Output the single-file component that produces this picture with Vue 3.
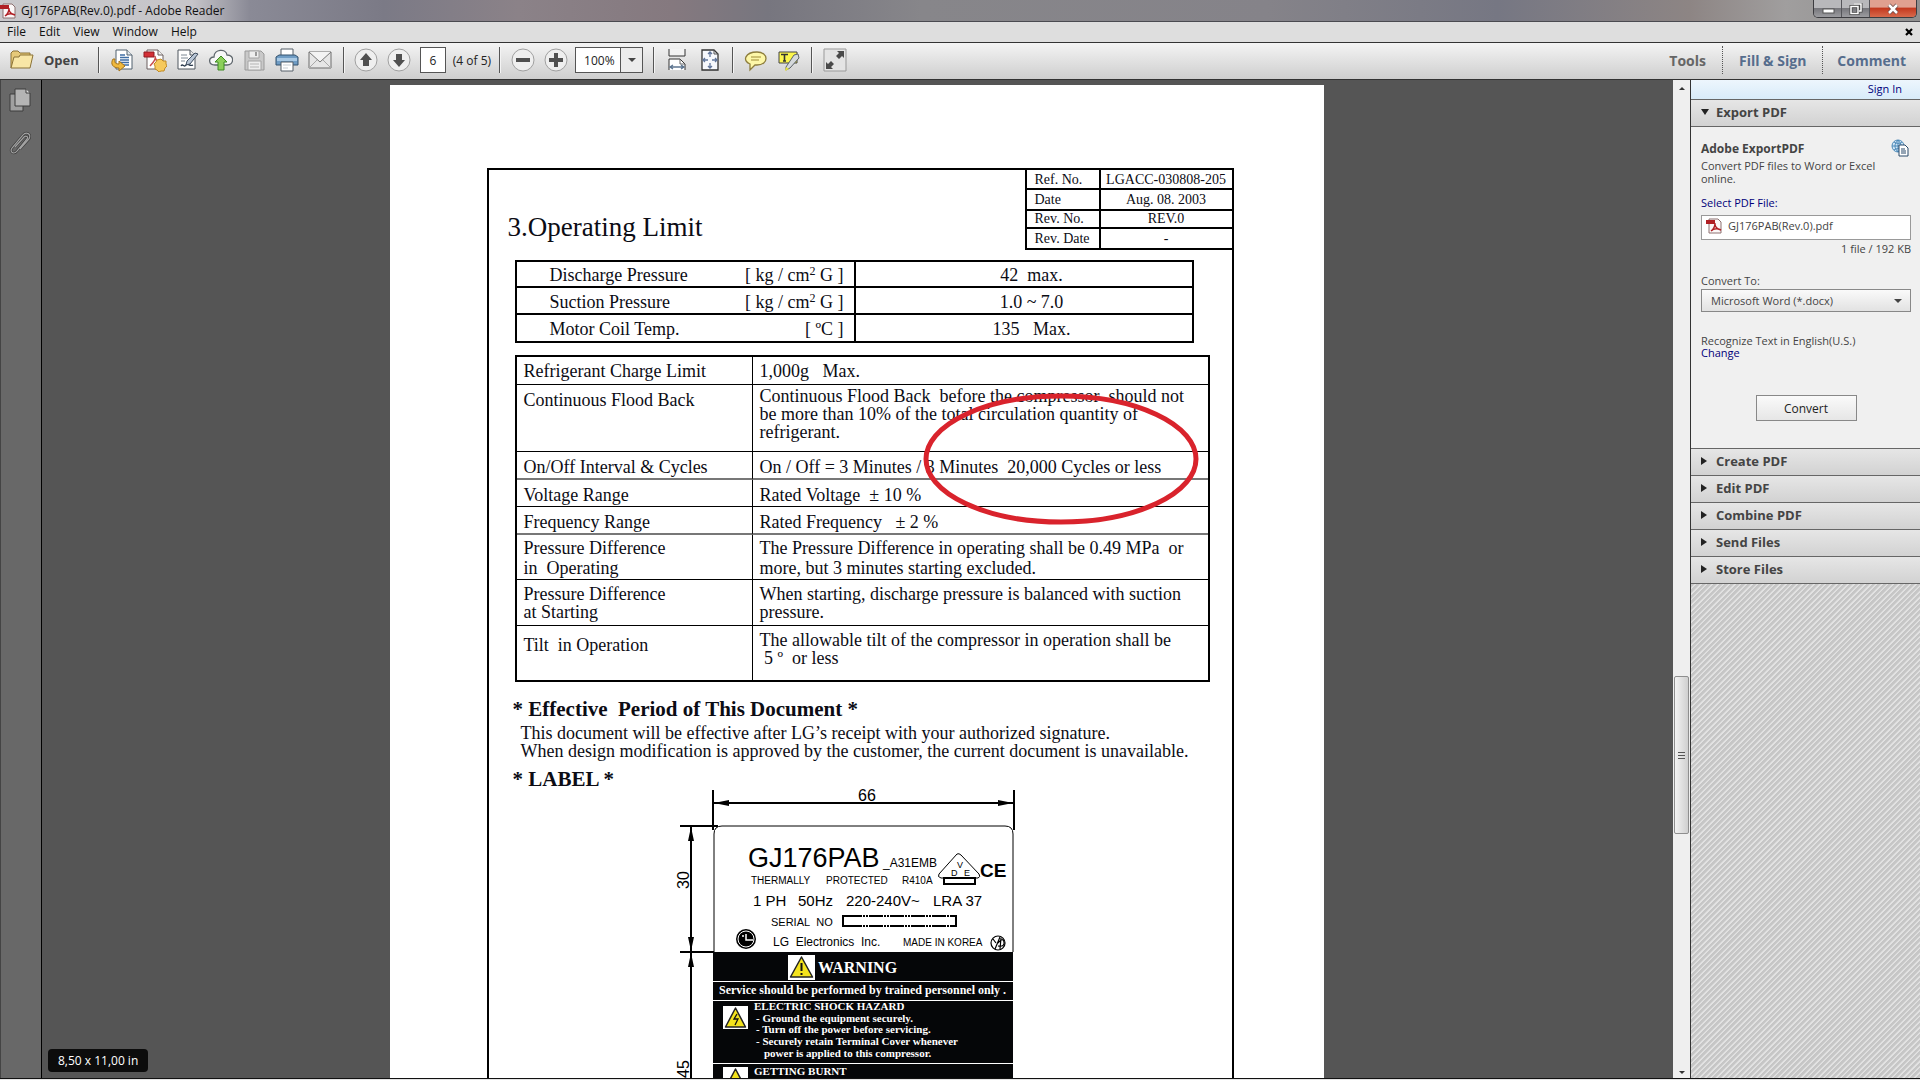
<template>
  <div class="reader">
    <header class="title-bar">
      <svg class="app-icon" viewBox="0 0 16 16" aria-hidden="true">
        <path d="M3 1h9l3 3v11H3z" fill="#fbf7f7" stroke="#8d7070" />
        <path d="M0 2h9v4H0z" fill="#b01f24" />
        <path d="M5 13c3-2 4-5 4-8M9 6c0 3 2 5 6 6M5 13c3-3 6-3 10-1" fill="none" stroke="#b01f24" stroke-width="1.4" />
      </svg>
      <h1 class="window-title">GJ176PAB(Rev.0).pdf - Adobe Reader</h1>
      <div class="window-buttons">
        <button class="win-btn" aria-label="Minimize">
          <svg viewBox="0 0 14 12"><rect x="2" y="6" width="11" height="4" fill="#fff" stroke="#555" /></svg>
        </button>
        <button class="win-btn restore" aria-label="Restore">
          <svg viewBox="0 0 14 12"><path d="M5 1h7v7h-2M2 3.500h7v7H2z" fill="none" stroke="#444" stroke-width="3" /><path d="M5 1h7v7h-2M2 3.500h7v7H2z" fill="none" stroke="#fff" stroke-width="1.500" /></svg>
        </button>
        <button class="win-btn close" aria-label="Close">
          <svg viewBox="0 0 14 12"><path d="M3 2l8 8M11 2l-8 8" stroke="#6b4a48" stroke-width="4" /><path d="M3 2l8 8M11 2l-8 8" stroke="#fff" stroke-width="2.500" /></svg>
        </button>
      </div>
    </header>

    <nav class="menu-bar">
      <button v-for="item in menus" :key="item" class="menu-item">{{ item }}</button>
      <button class="menu-close" aria-label="Close document">
        <svg viewBox="0 0 8 8"><path d="M1 1l6 6M7 1L1 7" stroke="#000" stroke-width="2.200" /></svg>
      </button>
    </nav>

    <div class="toolbar">
      <button class="open-btn">
        <svg viewBox="0 0 24 20">
          <path d="M1 18V3l2-2h5l2 2h10v4" fill="#e6c979" stroke="#8b7237" />
          <path d="M1 18L4 7h5l1-2h13l-3 13z" fill="#f8e6a6" stroke="#8b7237" />
        </svg>
        <span>Open</span>
      </button>
      <span class="sep"></span>
      <button class="tool" aria-label="Export">
        <svg viewBox="0 0 24 24">
          <path d="M6 2h11l5 5v14H6z" fill="#fff" stroke="#51606f" />
          <path d="M17 2v5h5" fill="#dfe6ec" stroke="#51606f" />
          <path d="M10 7h5M10 9.500h9M10 12h9M10 14.500h9M12 17h7" stroke="#3f6ea5" stroke-width="1.300" />
          <path d="M3 11c-3 5 0 9 6 9v3l6-5-6-5v3c-3 0-5-1-4-5z" fill="#f0b93e" stroke="#a4731a" />
        </svg>
      </button>
      <button class="tool" aria-label="Create PDF">
        <svg viewBox="0 0 24 24">
          <path d="M4 2h11l5 5v14H4z" fill="#fff" stroke="#6a5f5f" />
          <path d="M15 2v5h5" fill="#eee" stroke="#6a5f5f" />
          <path d="M7 18c4-4 6-8 5-10M12 9c1 4 3 6 7 6" fill="none" stroke="#c94e4e" stroke-width="1.500" />
          <path d="M1 4h10v5H1z" fill="#d32f36" stroke="#8f1d22" />
          <path d="M18 11l2 2 3 0v3l1 2-2 2-1 3h-3l-2 1-2-2-2-1v-3l-1-2 2-2 1-2z" fill="#f6c95c" stroke="#c08a24" />
        </svg>
      </button>
      <button class="tool" aria-label="Sign">
        <svg viewBox="0 0 24 24">
          <path d="M2 2h12l5 5v14H2z" fill="#fff" stroke="#4f565e" />
          <path d="M14 2v5h5" fill="#e9e9e9" stroke="#4f565e" />
          <path d="M5 7h6M5 10h7M5 13h4" stroke="#7d8894" />
          <path d="M5 18c2-3 3 2 5-1s3 2 7 0" fill="none" stroke="#26374a" stroke-width="1.300" />
          <path d="M11 13l8-8 3 1-8 10-4 1z" fill="#b9c6d6" stroke="#3f4e60" />
        </svg>
      </button>
      <button class="tool" aria-label="Upload">
        <svg viewBox="0 0 24 24">
          <path d="M6 17c-7 0-7-8-1-8 0-8 12-9 13-2 8 0 7 10 0 10z" fill="#f7f7f7" stroke="#5e666c" stroke-width="1.300" />
          <path d="M12 8l6 6h-3v8H9v-8H6z" fill="#8ccf5a" stroke="#3d8a22" />
        </svg>
      </button>
      <button class="tool" aria-label="Save" disabled>
        <svg viewBox="0 0 24 24">
          <path d="M3 3h16l3 3v16H3z" fill="#c9c9c9" stroke="#999" />
          <path d="M7 3h10v7H7zM6 13h13v9H6z" fill="#eee" stroke="#a4a4a4" />
          <path d="M13 4h2v4h-2z" fill="#999" />
          <path d="M8 16h9M8 19h9" stroke="#b4b4b4" />
        </svg>
      </button>
      <button class="tool" aria-label="Print">
        <svg viewBox="0 0 24 24">
          <path d="M6 1h12v9H6z" fill="#fff" stroke="#555f69" />
          <path d="M1 9l3-2h16l3 2v8H1z" fill="#6f9cc4" stroke="#34536f" />
          <path d="M2 10h20v3H2z" fill="#a9c9e4" />
          <path d="M6 14h12v9H6z" fill="#fff" stroke="#555f69" />
          <path d="M8 17h8M8 20h5" stroke="#c5ccd2" />
        </svg>
      </button>
      <button class="tool" aria-label="Mail">
        <svg viewBox="0 0 24 24">
          <path d="M1 4h22v16H1z" fill="#e6e6e6" stroke="#6c6c6c" />
          <path d="M1 20l8-8M23 20l-8-8" stroke="#a9a9a9" />
          <path d="M1 4l11 10L23 4" fill="#f3f3f3" stroke="#777" />
        </svg>
      </button>
      <span class="sep"></span>
      <button class="tool round" aria-label="Previous page">
        <svg viewBox="0 0 24 24"><circle cx="12" cy="12" r="11" /><path d="M12 5l6 7h-3v6H9v-6H6z" /></svg>
      </button>
      <button class="tool round" aria-label="Next page">
        <svg viewBox="0 0 24 24"><circle cx="12" cy="12" r="11" /><path d="M12 19l6-7h-3V6H9v6H6z" /></svg>
      </button>
      <input v-model="pageNumber" class="page-input" type="text" aria-label="Page" />
      <span class="page-count">(4 of 5)</span>
      <span class="sep"></span>
      <button class="tool round" aria-label="Zoom out">
        <svg viewBox="0 0 24 24"><circle cx="12" cy="12" r="11" /><path d="M5 10h14v4H5z" /></svg>
      </button>
      <button class="tool round" aria-label="Zoom in">
        <svg viewBox="0 0 24 24"><circle cx="12" cy="12" r="11" /><path d="M10 5h4v5h5v4h-5v5h-4v-5H5v-4h5z" /></svg>
      </button>
      <div class="zoom-box">
        <select v-model="zoom" aria-label="Zoom level">
          <option>100%</option>
          <option>125%</option>
        </select>
        <span class="zoom-arrow"><i class="caret"></i></span>
      </div>
      <span class="sep"></span>
      <button class="tool" aria-label="Fit width">
        <svg viewBox="0 0 24 24">
          <path d="M4 1v7h16V1" fill="#f3f3f3" stroke="#333" />
          <path d="M4 22V11h11l5 5v6" fill="#fff" stroke="#333" />
          <path d="M15 11v5h5" fill="none" stroke="#666" />
          <path d="M6 19h12M8 17l-3 2 3 2M16 17l3 2-3 2" fill="none" stroke="#5d7590" stroke-width="1.300" />
        </svg>
      </button>
      <button class="tool" aria-label="Fit page">
        <svg viewBox="0 0 24 24">
          <path d="M4 2h12l4 4v16H4z" fill="#f6f8fc" stroke="#333" stroke-width="1.300" />
          <path d="M16 2v4h4" fill="none" stroke="#555" />
          <path d="M12 4v5M12 15v5M6 12h4M14 12h4M10 6l2-2 2 2M10 18l2 2 2-2M7 10l-2 2 2 2M17 10l2 2-2 2" fill="none" stroke="#60759b" stroke-width="1.300" />
        </svg>
      </button>
      <span class="sep"></span>
      <button class="tool" aria-label="Comment">
        <svg viewBox="0 0 24 24">
          <path d="M13 4c12 0 12 13 0 13h-2l-5 5v-6c-8-3-5-12 7-12z" fill="#fdf7a8" stroke="#8d7d3c" stroke-width="1.300" />
          <path d="M7 9h10M7 12h8" stroke="#a08b36" stroke-width="1.200" />
        </svg>
      </button>
      <button class="tool" aria-label="Highlight text">
        <svg viewBox="0 0 24 24">
          <path d="M2 4h18v11H2z" fill="#fbf64c" stroke="#444" />
          <path d="M4 6.500h7M7.500 7v6M6 13h3" stroke="#333" stroke-width="1.600" />
          <path d="M9 19l8-12 4-1 1 4-9 10-4 2z" fill="#d5d9dc" stroke="#5c6266" />
          <path d="M9 19l3 2-4 2z" fill="#e6e33f" />
        </svg>
      </button>
      <span class="sep"></span>
      <button class="tool" aria-label="Read mode">
        <svg viewBox="0 0 24 24">
          <path d="M1 1h22v22H1z" fill="#e4e4e4" stroke="#999" />
          <path d="M14 3h7v7l-2-2-3 3-3-3 3-3zM10 21H3v-7l2 2 3-3 3 3-3 3z" fill="#4a4a4a" />
        </svg>
      </button>

      <div class="pane-tabs">
        <button class="pane-tab active">Tools</button>
        <button class="pane-tab">Fill &amp; Sign</button>
        <button class="pane-tab">Comment</button>
      </div>
    </div>

    <div class="workspace">
      <aside class="side-bar">
        <button aria-label="Page thumbnails">
          <svg viewBox="0 0 22 24">
            <path d="M1 6h13v17H1z" fill="#a0a0a0" stroke="#3d3d3d" />
            <path d="M6 1h11l4 4v13H6z" fill="#b4b4b4" stroke="#3d3d3d" />
            <path d="M17 1v4h4" fill="#ddd" stroke="#3d3d3d" />
          </svg>
        </button>
        <button aria-label="Attachments">
          <svg viewBox="0 0 22 24">
            <path d="M6 16L15 6c2-2 5 0 3 2L8 20c-3 4-8 1-5-3L14 4c3-4 9-1 6 4l-9 10" fill="none" stroke="#3a3a3a" stroke-width="2.600" />
            <path d="M6 16L15 6c2-2 5 0 3 2L8 20c-3 4-8 1-5-3L14 4c3-4 9-1 6 4l-9 10" fill="none" stroke="#a3a3a3" stroke-width="1.200" />
          </svg>
        </button>
      </aside>

      <main class="viewer">
        <article class="page">
          <div class="frame">
            <div class="frame-head">
              <h2>3.Operating Limit</h2>
              <table class="ref-table">
                <tbody>
                  <tr v-for="row in refRows" :key="row.name">
                    <th>{{ row.name }}</th>
                    <td>{{ row.value }}</td>
                  </tr>
                </tbody>
              </table>
            </div>

            <div class="pressure">
              <table>
                <tbody>
                  <tr>
                    <th>Discharge Pressure</th>
                    <td class="unit">[ kg / cm<sup>2</sup> G ]</td>
                    <td class="value">42&nbsp; max.</td>
                  </tr>
                  <tr>
                    <th>Suction Pressure</th>
                    <td class="unit">[ kg / cm<sup>2</sup> G ]</td>
                    <td class="value">1.0 ~ 7.0</td>
                  </tr>
                  <tr>
                    <th>Motor Coil Temp.</th>
                    <td class="unit">[ ºC ]</td>
                    <td class="value">135&nbsp;&nbsp; Max.</td>
                  </tr>
                </tbody>
              </table>
            </div>

            <div class="limits">
              <table>
                <tbody>
                  <tr v-for="row in limitRows" :key="row.name" :class="row.kind">
                    <th>{{ row.name }}</th>
                    <td>{{ row.text }}</td>
                  </tr>
                </tbody>
              </table>
            </div>

            <h3>* Effective&nbsp; Period of This Document *</h3>
            <p class="period">
              This document will be effective after LG’s receipt with your authorized signature.<br />
              When design modification is approved by the customer, the current document is unavailable.
            </p>
            <h3 class="label-title">* LABEL *</h3>

            <svg class="label-drawing" viewBox="0 8 370 322" width="370" height="322">
              <!-- dimension lines -->
              <g stroke="#000" stroke-width="2" fill="none">
                <path d="M53 10v40M354 10v40M53 23h301M20 46h38M31 46v126M20 172h34M31 172v158" />
              </g>
              <path d="M54 23l15-3v6zM353 23l-15-3v6zM31 47l-3 14h6zM31 171l-3-14h6zM31 173l-3 14h6z" />
              <text class="dim" x="198" y="21">66</text>
              <text class="dim" transform="translate(29 109) rotate(-90)">30</text>
              <text class="dim" transform="translate(29 298) rotate(-90)">45</text>

              <!-- rating plate -->
              <path d="M54 172V54q0-8 8-8h283q8 0 8 8v118" fill="#fff" stroke="#000" />
              <g class="plate">
                <text x="88" y="87" font-size="27">GJ176PAB</text>
                <text x="223" y="87" font-size="12">_A31EMB</text>
                <text x="91" y="104" font-size="10">THERMALLY</text>
                <text x="166" y="104" font-size="10">PROTECTED</text>
                <text x="242" y="104" font-size="10">R410A</text>
                <text x="93" y="126" font-size="15">1 PH</text>
                <text x="138" y="126" font-size="15">50Hz</text>
                <text x="186" y="126" font-size="15">220-240V~</text>
                <text x="273" y="126" font-size="15">LRA 37</text>
                <text x="111" y="146" font-size="11">SERIAL&nbsp; NO</text>
                <text x="113" y="166" font-size="12">LG&nbsp; Electronics&nbsp; Inc.</text>
                <text x="243" y="166" font-size="10">MADE IN KOREA</text>
                <text x="320" y="97" font-size="19" font-weight="700">CE</text>
                <text x="297" y="88" font-size="9">V</text>
                <text x="291" y="96" font-size="9">D</text>
                <text x="304" y="96" font-size="9">E</text>
              </g>
              <path d="M297 74q2-1 4 1l18 19q2 3-1 4h-37q-4-1-2-4z" fill="none" stroke="#000" />
              <path d="M284 98h31v6h-31z" fill="#fff" stroke="#000" stroke-width="2" />
              <path d="M188 136h-5v10h5M291 136h5v10h-5" fill="none" stroke="#000" stroke-width="2" />
              <path d="M188 136h104M188 146h104" stroke="#000" stroke-width="2" stroke-dasharray="14 1 2 1 2 1" />
              <circle cx="86" cy="159" r="10" />
              <circle cx="86" cy="159" r="8" fill="none" stroke="#fff" />
              <path d="M86 154v6h7" fill="none" stroke="#fff" stroke-width="1.500" />
              <circle cx="83" cy="156" r="1" fill="#fff" />
              <g fill="none" stroke="#000" stroke-width="1.200">
                <circle cx="338" cy="163" r="7" />
                <path d="M333 159l3 4M340 157l-5 12M338 163q5-6 6-1t-6 4M341 158l-1 11" />
              </g>

              <!-- warning plate -->
              <path d="M53 172h300v160H53z" fill="#050608" />
              <path d="M53 201.500h300M53 220.500h300M53 283.500h300" stroke="#fff" />
              <path d="M128 175h27v25h-27zM63 226h25v23H63zM63 287h25v23H63z" fill="#fff" />
              <g fill="#f3e21c" stroke="#222" stroke-width="1.500" stroke-linejoin="round">
                <path d="M141.500 177l11 20h-22z" />
                <path d="M75.500 228l10 19h-20z" />
                <path d="M75.500 289l10 19h-20z" />
              </g>
              <path d="M141.500 183v8M141.500 193v2" stroke="#111" stroke-width="2" />
              <path d="M77 234l-3 5h4l-3 6" fill="none" stroke="#111" stroke-width="1.300" />
              <g class="warning">
                <text x="158" y="193" font-size="16">WARNING</text>
                <text x="59" y="214" font-size="12">Service should be performed by trained personnel only .</text>
                <text x="94" y="230" font-size="11">ELECTRIC SHOCK HAZARD</text>
                <text x="96" y="242" font-size="11">- Ground the equipment securely.</text>
                <text x="96" y="253" font-size="11">- Turn off the power before servicing.</text>
                <text x="96" y="265" font-size="11">- Securely retain Terminal Cover whenever</text>
                <text x="104" y="277" font-size="11">power is applied to this compressor.</text>
                <text x="94" y="295" font-size="11">GETTING BURNT</text>
              </g>
            </svg>
          </div>

          <svg class="markup" viewBox="0 0 276 132">
            <ellipse cx="138" cy="66" rx="135" ry="63" fill="none" stroke="#d9232c" stroke-width="5" />
          </svg>
        </article>
        <div class="size-chip">8,50 x 11,00 in</div>
      </main>

      <div class="scrollbar">
        <span class="scroll-arrow up"></span>
        <span class="track-above"></span>
        <span class="thumb"><i></i><i></i><i></i></span>
        <span class="track-below"></span>
        <span class="scroll-arrow down"></span>
      </div>

      <aside class="panel">
        <div class="sign-in"><a href="#">Sign In</a></div>
        <button class="section-head open"><i class="tri"></i>Export PDF</button>
        <section class="export">
          <div class="export-title">
            <strong>Adobe ExportPDF</strong>
            <svg viewBox="0 0 18 18">
              <circle cx="7" cy="7" r="6" fill="#cfe5f5" stroke="#4c89b8" />
              <path d="M1 7h12M7 1v12M3 3c3 2 6 2 8 0M3 11c3-2 6-2 8 0M7 1c-4 4-4 8 0 12M7 1c4 4 4 8 0 12" fill="none" stroke="#4c89b8" />
              <path d="M8 6h6l3 3v8H8z" fill="#fff" stroke="#2a4a6a" />
              <path d="M10 10h4M10 12h5M10 14h5" stroke="#2a4a6a" />
            </svg>
          </div>
          <p class="export-desc">Convert PDF files to Word or Excel online.</p>
          <a href="#" class="select-file">Select PDF File:</a>
          <div class="file-box">
            <svg viewBox="0 0 16 16">
              <path d="M3 1h9l3 3v11H3z" fill="#fbf7f7" stroke="#8d7070" />
              <path d="M0 2h9v4H0z" fill="#b01f24" />
              <path d="M5 13c3-2 4-5 4-8M9 6c0 3 2 5 6 6M5 13c3-3 6-3 10-1" fill="none" stroke="#b01f24" stroke-width="1.4" />
            </svg>
            <span>GJ176PAB(Rev.0).pdf</span>
          </div>
          <p class="file-size">1 file / 192 KB</p>
          <label class="convert-label" for="format">Convert To:</label>
          <div class="format-box">
            <select id="format" v-model="format">
              <option>Microsoft Word (*.docx)</option>
              <option>Microsoft Excel (*.xlsx)</option>
            </select>
            <i class="caret"></i>
          </div>
          <p class="recognize">Recognize Text in English(U.S.)<br /><a href="#">Change</a></p>
          <button class="convert-btn">Convert</button>
        </section>
        <button v-for="name in sections" :key="name" class="section-head">
          <i class="tri"></i>{{ name }}
        </button>
        <div class="hatch"></div>
      </aside>
    </div>
    <footer class="taskbar-edge"></footer>
  </div>
</template>

<script setup>
import { ref } from 'vue'

const menus = ['File', 'Edit', 'View', 'Window', 'Help']
const sections = ['Create PDF', 'Edit PDF', 'Combine PDF', 'Send Files', 'Store Files']

const pageNumber = ref('6')
const zoom = ref('100%')
const format = ref('Microsoft Word (*.docx)')

const refRows = [
  { name: 'Ref. No.', value: 'LGACC-030808-205' },
  { name: 'Date', value: 'Aug. 08. 2003' },
  { name: 'Rev. No.', value: 'REV.0' },
  { name: 'Rev. Date', value: '-' }
]

// double spaces and line breaks are kept by white-space: pre-wrap
const limitRows = [
  { kind: 'charge', name: 'Refrigerant Charge Limit', text: '1,000g   Max.' },
  {
    kind: 'flood',
    name: 'Continuous Flood Back',
    text: 'Continuous Flood Back  before the compressor  should not\nbe more than 10% of the total circulation quantity of\nrefrigerant.'
  },
  { kind: 'cycles', name: 'On/Off Interval & Cycles', text: 'On / Off = 3 Minutes / 3 Minutes  20,000 Cycles or less' },
  { kind: 'voltage', name: 'Voltage Range', text: 'Rated Voltage  ± 10 %' },
  { kind: 'frequency', name: 'Frequency Range', text: 'Rated Frequency   ± 2 %' },
  {
    kind: 'operating',
    name: 'Pressure Difference\nin  Operating',
    text: 'The Pressure Difference in operating shall be 0.49 MPa  or\nmore, but 3 minutes starting excluded.'
  },
  {
    kind: 'starting',
    name: 'Pressure Difference\nat Starting',
    text: 'When starting, discharge pressure is balanced with suction\npressure.'
  },
  {
    kind: 'tilt',
    name: 'Tilt  in Operation',
    text: 'The allowable tilt of the compressor in operation shall be\n 5 º  or less'
  }
]
</script>

<style>
body {
  margin: 0;
  overflow: hidden;
}
</style>

<style scoped>
.reader {
  height: 100vh;
  display: flex;
  flex-direction: column;
  font-family: "Open Sans", "Noto Sans", sans-serif;
  font-size: 12px;
  color: #222;
  background: #dedede;
}

.reader * {
  box-sizing: border-box;
}

button,
input,
select {
  font: inherit;
  color: inherit;
  border: 0;
  padding: 0;
  margin: 0;
  background: none;
  border-radius: 0;
}

h1,
h2,
h3,
p {
  margin: 0;
}

a {
  color: #00007a;
  text-decoration: none;
}

table {
  border-collapse: separate;
  border-spacing: 0;
  table-layout: fixed;
}

th,
td {
  padding: 0;
  font-weight: 400;
  text-align: left;
  vertical-align: top;
}

/* window chrome */
.title-bar {
  height: 22px;
  flex-shrink: 0;
  display: flex;
  align-items: center;
  border-bottom: 1px solid #4a4a50;
  background: linear-gradient(90deg, #c9c8cb 0, #c6c5c9 10%, #8a8a96 13%, #7b7a86 20%, #8b8288 27%, #85797f 35%, #77767f 40%, #87868a 48%, #858389 66%, #767783 78%, #8d8584 88%, #a09e9e 93%, #8f8f8f 100%);
}

.app-icon {
  width: 16px;
  height: 16px;
}

.window-title {
  margin-left: 5px;
  font-size: 12px;
  font-weight: 400;
  color: #111;
}

.window-buttons {
  margin: 0 3px 0 auto;
  height: 18px;
  align-self: flex-start;
  display: flex;
  border: 1px solid #3c3c40;
  border-top: 0;
  border-radius: 0 0 5px 5px;
  overflow: hidden;
}

.win-btn {
  width: 28px;
  display: flex;
  align-items: center;
  justify-content: center;
  border-right: 1px solid #55555a;
  background: linear-gradient(#b8b8bb 0 45%, #77777c 50%, #9c9ca0);
}

.win-btn svg {
  width: 14px;
  height: 12px;
}

.win-btn.close {
  width: 46px;
  border-right: 0;
  background: linear-gradient(#e0a090 0 40%, #c43a20 50%, #d8694c);
}

.menu-bar {
  height: 20px;
  flex-shrink: 0;
  display: flex;
  align-items: center;
  gap: 13px;
  padding: 0 7px;
  background: #dedede;
}

.menu-item {
  line-height: 18px;
  color: #111;
}

.menu-close {
  margin-left: auto;
  width: 8px;
  height: 8px;
  display: flex;
}

/* toolbar */
.toolbar {
  height: 38px;
  flex-shrink: 0;
  display: flex;
  align-items: center;
  padding-bottom: 2px;
  border-top: 1px solid #333;
  border-bottom: 1px solid #333;
  background: linear-gradient(#f4f4f4, #cecece);
}

.open-btn {
  display: flex;
  align-items: center;
  gap: 10px;
  padding: 0 19px 0 10px;
  font-size: 13px;
  font-weight: 700;
  color: #444;
}

.open-btn svg {
  width: 24px;
  height: 20px;
}

.sep {
  width: 2px;
  height: 26px;
  margin: 0 5px 0 6px;
  border-left: 1px solid #555;
  border-right: 1px solid #f4f4f4;
  flex-shrink: 0;
}

.open-btn + .sep {
  margin: 0 6px 0 0;
}

.tool {
  width: 33px;
  height: 26px;
  flex-shrink: 0;
  display: flex;
  align-items: center;
  justify-content: center;
}

.tool svg {
  width: 24px;
  height: 24px;
}

.round circle {
  fill: #efefef;
  stroke: #a0a0a0;
}

.round path {
  fill: #505050;
}

.page-input {
  width: 26px;
  height: 26px;
  margin-left: 4px;
  border: 1px solid #555;
  background: #fff;
  text-align: center;
}

.page-count {
  padding: 0 2px 0 7px;
  white-space: nowrap;
}

.zoom-box {
  width: 68px;
  height: 26px;
  margin: 0 4px 0 3px;
  display: flex;
  border: 1px solid #555;
  background: #fff;
}

.zoom-box select {
  flex: 1;
  min-width: 0;
  padding-left: 8px;
  appearance: none;
}

.zoom-arrow {
  width: 22px;
  display: flex;
  align-items: center;
  justify-content: center;
  border-left: 1px solid #555;
  background: #ececec;
  pointer-events: none;
}

.caret {
  border: 4px solid transparent;
  border-top-color: #444;
  border-bottom: 0;
}

.pane-tabs {
  margin-left: auto;
  display: flex;
}

.pane-tab {
  height: 28px;
  padding: 0 16px;
  font-size: 14px;
  font-weight: 700;
  color: #566d8d;
  border-left: 1px dotted #555;
}

.pane-tab:last-child {
  padding: 0 14px;
}

.pane-tab.active {
  color: #666;
  border-left: 0;
}

/* workspace */
.workspace {
  flex: 1;
  min-height: 0;
  display: flex;
}

.side-bar {
  width: 42px;
  flex-shrink: 0;
  display: flex;
  flex-direction: column;
  align-items: center;
  gap: 19px;
  padding: 8px 3px 0 0;
  background: #686868;
  border-left: 1px solid #444;
  border-right: 1px solid #000;
}

.side-bar svg {
  display: block;
  width: 22px;
  height: 24px;
}

.viewer {
  position: relative;
  flex: 1;
  min-width: 0;
  overflow: hidden;
  display: flex;
  justify-content: center;
  align-items: flex-start;
  padding: 5px 2px 0 0;
  background: #555;
}

.page {
  position: relative;
  width: 100%;
  max-width: 934px;
  padding: 83px 90px 0 97px;
  background: #fff;
  color: #0c0c14;
  font-family: "Liberation Serif", serif;
  font-size: 18px;
  line-height: 18px;
}

.frame {
  border: 2px solid #000;
  border-bottom: 0;
}

.frame-head {
  display: flex;
  justify-content: space-between;
  align-items: flex-end;
}

.frame-head h2 {
  padding: 0 0 8px 19px;
  font-size: 27px;
  line-height: 30px;
  font-weight: 400;
}

.ref-table {
  width: 207px;
  border-left: 2px solid #000;
  font-size: 14px;
  line-height: 16px;
}

.ref-table th,
.ref-table td {
  height: 21px;
  padding-top: 1px;
  border-bottom: 2px solid #000;
  vertical-align: middle;
}

.ref-table tr:first-child > * {
  height: 20px;
}

.ref-table tr:nth-child(3) > * {
  height: 18px;
  padding-top: 0;
}

.ref-table th {
  width: 74px;
  padding-left: 8px;
  border-right: 2px solid #000;
}

.ref-table td {
  text-align: center;
}

.pressure {
  margin: 10px 38px 0 26px;
}

.limits {
  margin: 12px 22px 0 26px;
}

.pressure table,
.limits table {
  width: 100%;
  border: 2px solid #000;
}

.pressure th,
.pressure td {
  height: 27px;
  padding-top: 5px;
  border-bottom: 2px solid #000;
}

.pressure tr:first-child > * {
  height: 26px;
  padding-top: 4px;
}

.pressure tr:last-child > * {
  height: 26px;
  border-bottom: 0;
}

.pressure th {
  width: 220px;
  padding-left: 33px;
}

.pressure .unit {
  width: 119px;
  padding-right: 10px;
  text-align: right;
  border-right: 2px solid #000;
}

.pressure .value {
  padding-left: 16px;
  text-align: center;
}

sup {
  font-size: 12px;
  line-height: 0;
  vertical-align: 6px;
}

.limits th,
.limits td {
  height: 28px;
  padding: 6px 0 0 7px;
  border-bottom: 1px solid #000;
  white-space: pre-wrap;
}

.limits th {
  width: 236px;
  border-right: 1px solid #000;
}

.limits td {
  white-space: pre;
}

.limits .charge > * {
  padding-top: 5px;
}

.limits .cycles > *,
.limits .frequency > * {
  border-bottom: 2px solid #777;
}

.limits .voltage > * {
  height: 27px;
}

.limits .flood > * {
  height: 67px;
}

.limits .flood td {
  padding-top: 2px;
}

.limits .operating > * {
  height: 45px;
  padding-top: 3px;
  line-height: 20px;
}

.limits .starting > * {
  height: 46px;
  padding-top: 5px;
}

.limits .tilt > * {
  height: 54px;
  padding-top: 5px;
  border-bottom: 0;
}

.limits .tilt th {
  padding-top: 10px;
}

h3 {
  margin: 15px 0 0 24px;
  font-size: 21px;
  line-height: 24px;
}

.period {
  margin: 3px 0 0 32px;
  white-space: nowrap;
}

.label-title {
  margin-top: 10px;
  line-height: 18px;
}

.label-drawing {
  display: block;
  margin-left: 171px;
}

.dim {
  font-family: "Liberation Sans", sans-serif;
  font-size: 16px;
}

.plate {
  font-family: "Liberation Sans", sans-serif;
}

.warning {
  fill: #fff;
  font-family: "Liberation Serif", serif;
  font-weight: 700;
}

/* hand-drawn mark over the table */
.markup {
  position: absolute;
  left: 533px;
  top: 308px;
  width: 276px;
  height: 132px;
}

.size-chip {
  position: absolute;
  left: 6px;
  bottom: 6px;
  padding: 0 10px;
  line-height: 23px;
  border-radius: 4px;
  background: #0c0c0c;
  color: #fff;
}

/* scrollbar */
.scrollbar {
  width: 17px;
  flex-shrink: 0;
  display: flex;
  flex-direction: column;
  align-items: center;
  background: #efefef;
}

.scroll-arrow {
  width: 0;
  border: 3px solid transparent;
}

.scroll-arrow.up {
  margin: 4px 0 7px;
  border-bottom-color: #333;
}

.scroll-arrow.down {
  margin: 9px 0 1px;
  border-top-color: #333;
}

.track-above {
  flex: 580;
}

.track-below {
  flex: 228;
}

.thumb {
  flex: 156;
  width: 15px;
  display: flex;
  flex-direction: column;
  align-items: center;
  justify-content: center;
  gap: 2px;
  border: 1px solid #8e8e8e;
  border-radius: 2px;
  background: linear-gradient(90deg, #f3f3f3, #cfcfcf);
}

.thumb i {
  width: 7px;
  height: 1px;
  background: #555;
}

/* tools panel */
.panel {
  width: 230px;
  flex-shrink: 0;
  display: flex;
  flex-direction: column;
  border-left: 1px solid #333;
  background: #f0f0f0;
  color: #444;
  font-size: 11px;
}

.sign-in {
  height: 19px;
  padding-right: 18px;
  line-height: 18px;
  text-align: right;
  background: linear-gradient(#edf6fd, #d8ebf9);
}

.section-head {
  height: 27px;
  flex-shrink: 0;
  display: flex;
  align-items: center;
  gap: 9px;
  padding: 0 0 2px 10px;
  border-top: 1px solid #666;
  background: linear-gradient(#e6e6e6, #d2d2d2);
  font-size: 13px;
  font-weight: 700;
  color: #444;
}

.section-head.open {
  height: 28px;
  gap: 7px;
  border-bottom: 1px solid #666;
}

.tri {
  width: 6px;
  height: 8px;
  background: #222;
  clip-path: polygon(0 0, 100% 50%, 0 100%);
}

.open .tri {
  width: 8px;
  height: 6px;
  clip-path: polygon(0 0, 100% 0, 50% 100%);
}

.export {
  height: 321px;
  flex-shrink: 0;
  display: flex;
  flex-direction: column;
  align-items: stretch;
  padding: 12px 9px 0 10px;
}

.export-title {
  display: flex;
  justify-content: space-between;
  align-items: center;
  height: 18px;
  padding-right: 2px;
  font-size: 12px;
}

.export-title svg {
  width: 18px;
  height: 18px;
}

.export-desc {
  margin-top: 2px;
  line-height: 13px;
}

.select-file {
  margin-top: 10px;
  line-height: 16px;
}

.file-box {
  height: 25px;
  margin-top: 4px;
  display: flex;
  align-items: flex-start;
  gap: 6px;
  padding: 2px 4px;
  border: 1px solid #999;
  background: #fff;
  line-height: 16px;
}

.file-box svg {
  width: 16px;
  height: 16px;
}

.file-size {
  margin-top: 1px;
  line-height: 16px;
  text-align: right;
}

.convert-label {
  margin-top: 16px;
  line-height: 16px;
}

.format-box {
  height: 23px;
  display: grid;
  align-items: center;
  border: 1px solid #888;
  background: linear-gradient(#fafafa, #e2e2e2);
}

.format-box select,
.format-box .caret {
  grid-area: 1 / 1;
}

.format-box select {
  height: 21px;
  padding-left: 9px;
  appearance: none;
}

.format-box .caret {
  justify-self: end;
  margin-right: 8px;
  pointer-events: none;
}

.recognize {
  margin-top: 23px;
  line-height: 12px;
}

.convert-btn {
  align-self: center;
  width: 101px;
  height: 26px;
  margin-top: 36px;
  border: 1px solid #888;
  background: linear-gradient(#fafafa, #e6e6e6);
  font-size: 12px;
  color: #222;
}

.hatch {
  flex: 1;
  border-top: 1px solid #666;
  background: repeating-linear-gradient(135deg, #c6c6c6 0 2px, #e2e2e2 3px 4px);
}

.taskbar-edge {
  height: 2px;
  flex-shrink: 0;
  border-top: 1px solid #111;
  background: #e4e4e4;
}
</style>
